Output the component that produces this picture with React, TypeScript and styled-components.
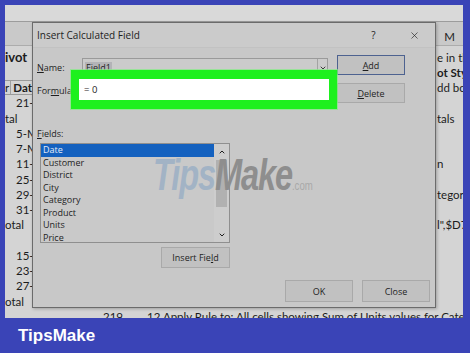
import React from 'react';
import styled, { createGlobalStyle } from 'styled-components';
import { ChevronDown, ChevronUp, X } from 'lucide-react';

const GlobalStyle = createGlobalStyle`
  html, body { margin: 0; padding: 0; background: #3a44b7; }
  * { box-sizing: border-box; }
`;

const Frame = styled.div`
  width: 470px;
  height: 353px;
  background: #3a44b7;
  display: flex;
  flex-direction: column;
  padding: 5px 7px 0 5px;
  font-family: Lato, "Liberation Sans", sans-serif;
`;

const Screen = styled.div`
  position: relative;
  height: 313px;
  flex: none;
  overflow: hidden;
  background: #d4d4d4;
  color: #1c1c1c;
  display: flex;
  flex-direction: column;
`;

const Ribbon = styled.div`
  height: 17px;
  flex: none;
  background: #d9d9d9;
  border-bottom: 1px solid #9c9c9c;
`;

const HeaderBand = styled.div`
  height: 24px;
  flex: none;
  background: #c9c9c9;
  border-bottom: 1px solid #acacac;
  display: flex;
  justify-content: flex-end;
  align-items: flex-end;
`;

const ColHead = styled.div`
  width: 27px;
  height: 16px;
  text-align: center;
  font-size: 11.5px;
  line-height: 16px;
`;

const Rows = styled.div`
  padding-top: 3.5px;
  display: flex;
  flex-direction: column;
`;

const Row = styled.div`
  height: 15.25px;
  flex: none;
  display: flex;
  justify-content: space-between;
  font-size: 11.5px;
  line-height: 15.25px;
`;

const LeftCell = styled.div<{ $indent?: number; $title?: boolean }>`
  width: 27px;
  padding-left: ${p => p.$indent ?? 0}px;
  white-space: nowrap;
  overflow: hidden;
  font-weight: ${p => (p.$title ? 700 : 400)};
  font-size: ${p => (p.$title ? '13px' : 'inherit')};
`;

const HeadCell = styled.div`
  width: 27px;
  display: flex;
  border-top: 1px solid #9a9a9a;
  border-bottom: 1px solid #9a9a9a;
  line-height: 13px;
  font-weight: 700;
  white-space: nowrap;
  overflow: hidden;
  span:first-child {
    width: 8px;
    font-weight: 400;
    border-right: 1px solid #a0a0a0;
  }
  span:last-child {
    padding-left: 2px;
  }
`;

const RightCell = styled.div<{ $bold?: boolean }>`
  width: 27px;
  padding-left: 1px;
  white-space: nowrap;
  overflow: hidden;
  font-weight: ${p => (p.$bold ? 700 : 400)};
`;

const BottomRow = styled(Row)`
  justify-content: flex-start;
  padding-left: 98px;
  white-space: nowrap;
  overflow: hidden;
`;

const NumCell = styled.span`
  width: 44px;
  flex: none;
`;

const Dialog = styled.div`
  position: absolute;
  left: 27px;
  top: 17px;
  width: 404px;
  height: 286px;
  background: #c8c8c8;
  border: 1px solid #6b6b6b;
  box-shadow: 1px 1px 3px rgba(0, 0, 0, 0.25);
  display: flex;
  flex-direction: column;
  font-family: "Open Sans", "Noto Sans", sans-serif;
  font-size: 9px;
  color: #1e1e1e;
`;

const TitleBar = styled.div`
  height: 25px;
  flex: none;
  display: flex;
  align-items: center;
  padding-left: 4px;
  font-size: 10px;
  background: #cbcbcb;
  border-bottom: 1px solid #c2c2c2;
`;

const Title = styled.div`
  flex: 1;
`;

const TitleAction = styled.div`
  width: 41px;
  display: flex;
  justify-content: center;
  align-items: center;
  font-size: 10px;
`;

const Body = styled.div`
  flex: 1;
  display: flex;
  flex-direction: column;
  padding-left: 4px;
`;

const TopGrid = styled.div`
  margin-top: 7px;
  display: grid;
  grid-template-columns: 45px 246px 77px;
  grid-template-rows: 23px 25px;
`;

const Label = styled.div<{ $row: number }>`
  grid-row: ${p => p.$row};
  grid-column: 1;
  align-self: ${p => (p.$row === 1 ? 'end' : 'center')};
  line-height: 20px;
  white-space: nowrap;
  u { text-decoration-thickness: 1px; }
`;

const NameInput = styled.div`
  grid-row: 1;
  grid-column: 2;
  align-self: end;
  height: 20px;
  border: 1px solid #9a9a9a;
  background: #cbcbcb;
  display: flex;
  align-items: center;
  padding-left: 2px;
`;

const Selected = styled.span`
  background: #b3b3b7;
  padding: 0 1px;
  line-height: 12px;
`;

const DropArrow = styled.div`
  margin-left: auto;
  width: 10px;
  height: 100%;
  border-left: 1px solid #a3a3a3;
  display: flex;
  align-items: center;
  justify-content: center;
`;

const FormulaInput = styled.div`
  grid-row: 2;
  grid-column: 2;
  align-self: start;
  margin: 1px -1px 0 -3px;
  height: 21px;
  background: #ffffff;
  display: flex;
  align-items: center;
  padding-left: 5px;
  font-size: 9.5px;
`;

const Button = styled.div<{ $default?: boolean; $w?: number; $h?: number }>`
  width: ${p => p.$w ?? 68}px;
  height: ${p => p.$h ?? 20}px;
  flex: none;
  background: #c1c1c1;
  border: 1px solid ${p => (p.$default ? '#4d6290' : '#a9a9a9')};
  display: flex;
  align-items: center;
  justify-content: center;
  white-space: nowrap;
`;

const GridButton = styled(Button)<{ $row: number }>`
  grid-row: ${p => p.$row};
  grid-column: 3;
  justify-self: end;
  align-self: ${p => (p.$row === 1 ? 'start' : 'end')};
`;

const FieldsLabel = styled.div`
  margin-top: 25px;
  line-height: 12px;
`;

const ListBlock = styled.div`
  margin-top: 3px;
  width: 193px;
  display: flex;
  flex-direction: column;
  align-items: flex-end;
`;

const ListBox = styled.div`
  width: 190px;
  height: 100px;
  border: 1px solid #8f8f8f;
  background: #c9c9c9;
  display: flex;
`;

const Items = styled.div`
  flex: 1;
  display: flex;
  flex-direction: column;
`;

const Item = styled.div<{ $active?: boolean }>`
  height: 12.5px;
  line-height: 12.5px;
  padding-left: 2px;
  background: ${p => (p.$active ? '#1461bf' : 'transparent')};
  color: ${p => (p.$active ? '#e6ecf8' : 'inherit')};
`;

const ScrollBar = styled.div`
  width: 15px;
  background: #cdcdcd;
  display: flex;
  flex-direction: column;
  align-items: center;
`;

const ScrollArrow = styled.div`
  height: 15px;
  flex: none;
  display: flex;
  align-items: center;
  justify-content: center;
`;

const Thumb = styled.div`
  width: 11px;
  height: 47px;
  margin-top: 1px;
  background: #b1b1b1;
`;

const ScrollFill = styled.div`
  flex: 1;
`;

const InsertButton = styled(Button)`
  margin-top: 4px;
`;

const Footer = styled.div`
  margin-top: 12px;
  display: flex;
  justify-content: flex-end;
  gap: 9px;
  padding-right: 5px;
`;

const Highlight = styled.div`
  position: absolute;
  left: 66px;
  top: 65px;
  width: 266px;
  height: 39px;
  border-style: solid;
  border-color: #1ef01e;
  border-width: 9px 8px;
  box-shadow: 0 0 0 1px rgba(130, 236, 130, 0.7);
`;

const Watermark = styled.div`
  position: absolute;
  left: 148px;
  top: 148px;
  font-family: "Liberation Sans", Arial, sans-serif;
  font-weight: 700;
  font-style: italic;
  font-size: 44px;
  line-height: 1;
  letter-spacing: -1.5px;
  white-space: nowrap;
  transform: scaleX(0.74);
  transform-origin: left top;
  pointer-events: none;
`;

const Tips = styled.span`
  color: #a2b3c5;
`;

const Make = styled.span`
  color: #8e8e8e;
`;

const Dot = styled.span`
  font-size: 13px;
  font-style: normal;
  font-weight: 400;
  letter-spacing: 0;
  color: #a9a9a9;
`;

const BrandBar = styled.div`
  flex: 1;
  display: flex;
  align-items: center;
  padding-left: 13px;
  font-family: "Liberation Sans", Arial, sans-serif;
  font-weight: 700;
  font-size: 17px;
  color: #ffffff;
`;

const sheetRows: { left?: string; indent?: number; right?: string; bold?: boolean; title?: boolean; head?: boolean }[] = [
  { left: 'ivot', title: true, right: 'e in th' },
  { right: 'ot Sty', bold: true },
  { head: true, right: 'dd bo' },
  { left: '21-', indent: 11 },
  { left: 'tal', right: 'tals' },
  { left: '5-M', indent: 11 },
  { left: '7-M', indent: 11 },
  { left: '11-', indent: 11, right: 'n' },
  { left: '25-', indent: 11 },
  { left: '29-', indent: 11, right: 'tegor' },
  { left: '31-', indent: 11 },
  { left: 'otal', right: 'l",$D7' },
  {},
  { left: '15-', indent: 11 },
  { left: '23-', indent: 11 },
  { left: '27-', indent: 11 },
  { left: 'otal' },
];

const fields = ['Date', 'Customer', 'District', 'City', 'Category', 'Product', 'Units', 'Price'];

const App = () => {
  return (
    <Frame>
      <GlobalStyle />
      <Screen>
        <Ribbon />
        <HeaderBand>
          <ColHead>M</ColHead>
        </HeaderBand>
        <Rows>
          {sheetRows.map((r, i) => (
            <Row key={i}>
              {r.head ? (
                <HeadCell><span>r</span><span>Dat</span></HeadCell>
              ) : (
                <LeftCell $indent={r.indent} $title={r.title}>{r.left}</LeftCell>
              )}
              <RightCell $bold={r.bold}>{r.right}</RightCell>
            </Row>
          ))}
          <BottomRow>
            <NumCell>219</NumCell>
            <span>12 Apply Rule to: All cells showing Sum of Units values for Category</span>
          </BottomRow>
        </Rows>

        <Dialog>
          <TitleBar>
            <Title>Insert Calculated Field</Title>
            <TitleAction>?</TitleAction>
            <TitleAction><X size={11} strokeWidth={1.4} /></TitleAction>
          </TitleBar>
          <Body>
            <TopGrid>
              <Label $row={1}><u>N</u>ame:</Label>
              <NameInput>
                <Selected>Field1</Selected>
                <DropArrow><ChevronDown size={8} strokeWidth={2.5} /></DropArrow>
              </NameInput>
              <GridButton $row={1} $default><span><u>A</u>dd</span></GridButton>
              <Label $row={2}>For<u>m</u>ula:</Label>
              <FormulaInput>= 0</FormulaInput>
              <GridButton $row={2}><span><u>D</u>elete</span></GridButton>
            </TopGrid>
            <FieldsLabel><u>F</u>ields:</FieldsLabel>
            <ListBlock>
              <ListBox>
                <Items>
                  {fields.map((f, i) => (
                    <Item key={f} $active={i === 0}>{f}</Item>
                  ))}
                </Items>
                <ScrollBar>
                  <ScrollArrow><ChevronUp size={8} strokeWidth={3} /></ScrollArrow>
                  <Thumb />
                  <ScrollFill />
                  <ScrollArrow><ChevronDown size={8} strokeWidth={3} /></ScrollArrow>
                </ScrollBar>
              </ListBox>
              <InsertButton $w={69} $h={21}><span>Insert Fie<u>l</u>d</span></InsertButton>
            </ListBlock>
            <Footer>
              <Button $h={22}>OK</Button>
              <Button $h={22}>Close</Button>
            </Footer>
          </Body>
        </Dialog>

        <Highlight />
        <Watermark>
          <Tips>Tips</Tips><Make>Make</Make><Dot>.com</Dot>
        </Watermark>
      </Screen>
      <BrandBar>TipsMake</BrandBar>
    </Frame>
  );
};

export default App;
